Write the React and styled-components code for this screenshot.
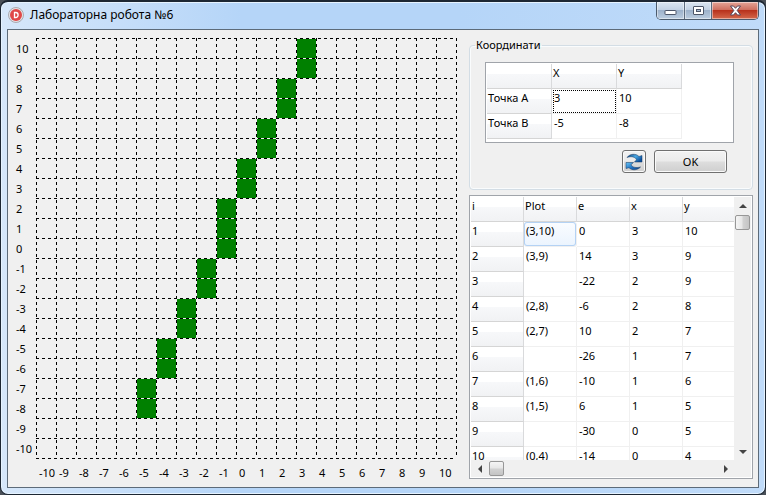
import React from 'react';
import styled, { createGlobalStyle, css } from 'styled-components';

const Global = createGlobalStyle`
  * { box-sizing: border-box; }
  body { margin: 0; background: #4a5058; }
  button, input { font: inherit; color: inherit; }
`;

const Frame = styled.main`
  display: flex;
  flex-direction: column;
  min-height: 100vh;
  padding: 0 6px;
  border: 1px solid #1d2733;
  border-top-width: 2px;
  border-radius: 8px;
  background: linear-gradient(90deg, #d6e7fa 0, #b5d5f8 240px, #b5d5f8 60%, #c0dbf9 100%);
  box-shadow: inset 0 0 0 1px #e6f3ff;
  font: 11px/14px "Noto Sans", sans-serif;
  color: #000;
`;

const TitleBar = styled.header`
  display: flex;
  align-items: flex-start;
  height: 27px;
`;

const Title = styled.h1`
  flex: 1;
  margin: 0;
  padding: 4px 0 0 6px;
  font: 12px/17px "Noto Sans", sans-serif;
`;

const AppIcon = styled.svg`
  width: 16px;
  height: 16px;
  margin: 5px 0 0 1px;
`;

const Captions = styled.div`
  display: flex;
  border: 1px solid #4b5a6c;
  border-top: 0;
  border-radius: 0 0 5px 5px;
  overflow: hidden;
`;

const CaptionButton = styled.button`
  display: grid;
  place-items: center;
  width: ${(p) => (p.$close ? 47 : 27)}px;
  height: 17px;
  padding: 0;
  border: 0;
  border-left: ${(p) => (p.$first ? 0 : '1px solid #5c6b7e')};
  background: ${(p) =>
    p.$close
      ? 'linear-gradient(#e5a598 0, #cf7060 45%, #b8321c 50%, #d4694c 100%)'
      : 'linear-gradient(#dbe6f2 0, #c3d2e4 45%, #9db2cb 50%, #bccde0 100%)'};
  box-shadow: inset 0 0 0 1px rgba(255, 255, 255, 0.45);
`;

const Client = styled.div`
  display: flex;
  flex: 1;
  gap: 12px;
  margin-bottom: 6px;
  padding: 8px 5px 7px 8px;
  border: 1px solid #5d6b79;
  background: #f0f0f0;
`;

const Chart = styled.section`
  display: grid;
  grid-template-columns: 20px 421px;
  grid-template-rows: 421px auto;
  align-content: start;
`;

const YAxis = styled.div`
  display: grid;
  grid-auto-rows: 20px;
  line-height: 22px;
`;

const XAxis = styled.div`
  grid-column: 2;
  display: grid;
  grid-template-columns: repeat(21, 20px);
  padding: 7px 0 0 3px;
  line-height: 14px;
`;

const Side = styled.div`
  display: flex;
  flex: 1;
  flex-direction: column;
  min-width: 0;
  padding-bottom: 1px;
`;

const Group = styled.fieldset`
  min-width: 0;
  height: 152px;
  margin: 0 0 5px;
  padding: 10px 18px 0 15px;
  border: 1px solid #d3dde5;
  border-radius: 4px;
  box-shadow: inset 0 0 0 1px #fafcfd;
`;

const Legend = styled.legend`
  margin-left: -10px;
  padding: 0 1px;
`;

const PointsBox = styled.div`
  height: 81px;
  padding: 1px;
  border: 1px solid #a0a4aa;
  background: #fff;
`;

const Table = styled.table`
  border-collapse: separate;
  border-spacing: 0;
  table-layout: fixed;
  width: ${(p) => p.$width}px;
`;

const heading = css`
  padding-left: 1px;
  background: linear-gradient(#fff 0, #fff 40%, #f7f8fa 42%, #f1f2f4 100%);
  border-right: 1px solid #d9dadc;
  border-bottom: 1px solid #d5d5d5;
`;

const Cell = styled.td`
  height: 25px;
  padding: 2px;
  overflow: hidden;
  border-right: 1px solid #f0f0f0;
  border-bottom: 1px solid #f0f0f0;
  font-weight: 400;
  line-height: 14px;
  text-align: left;
  vertical-align: top;
  white-space: nowrap;
  ${(p) => p.as === 'th' && heading}
  ${(p) => p.$focus && css`outline: 1px dotted #000; outline-offset: -2px;`}
  ${(p) => p.$selected && css`
    background: linear-gradient(#fafcff, #ebf4fe);
    box-shadow: inset 0 0 0 1px #b4d2f4;
    border-radius: 3px;
  `}
`;

const Actions = styled.div`
  display: flex;
  justify-content: flex-end;
  gap: 8px;
  padding: 7px 7px 0 0;
`;

const PushButton = styled.button`
  display: grid;
  place-items: center;
  width: ${(p) => p.$width}px;
  height: 23px;
  padding: 0;
  border: 1px solid #707070;
  border-radius: 3px;
  background: linear-gradient(#f2f2f2 0, #ebebeb 48%, #dddddd 52%, #cfcfcf 100%);
  box-shadow: inset 0 0 0 1px #fafafa;
`;

const ResultBox = styled.section`
  display: grid;
  flex: 1;
  grid-template-columns: 1fr 17px;
  grid-template-rows: 1fr 17px;
  min-height: 0;
  padding: 1px;
  border: 1px solid #a0a4aa;
  background: #fff;
`;

const TableView = styled.div`
  height: 263px;
  overflow: hidden;
`;

const ScrollBar = styled.div`
  display: flex;
  flex-direction: ${(p) => (p.$vertical ? 'column' : 'row')};
  background: #f0f0f0;
`;

const Arrow = styled.button`
  display: grid;
  place-items: center;
  width: 17px;
  height: 17px;
  padding: 0;
  border: 0;
  background: none;
`;

const Thumb = styled.div`
  width: 15px;
  height: 15px;
  margin: 1px;
  border: 1px solid #979797;
  border-radius: 2px;
  background: linear-gradient(${(p) => (p.$vertical ? '90deg' : '180deg')}, #f5f5f5 0, #e6e6e6 48%, #d2d2d2 52%, #c4c4c4 100%);
`;

const Track = styled.div`
  flex: 1;
`;

const Corner = styled.div`
  background: #f0f0f0;
`;

const MIN = -10;
const COUNT = 21;
const STEP = 20;
const ticks = Array.from({ length: COUNT }, (_, i) => MIN + i);
const lines = Array.from({ length: COUNT + 1 }, (_, i) => i * STEP);

const pixels = [
  [3, 10], [3, 9], [2, 8], [2, 7], [1, 6], [1, 5], [0, 4], [0, 3],
  [-1, 2], [-1, 1], [-1, 0], [-2, -1], [-2, -2], [-3, -3], [-3, -4],
  [-4, -5], [-4, -6], [-5, -7], [-5, -8],
];

const points = [
  ['Точка A', 3, 10],
  ['Точка B', -5, -8],
];

const steps = [
  [1, '(3,10)', 0, 3, 10],
  [2, '(3,9)', 14, 3, 9],
  [3, '', -22, 2, 9],
  [4, '(2,8)', -6, 2, 8],
  [5, '(2,7)', 10, 2, 7],
  [6, '', -26, 1, 7],
  [7, '(1,6)', -10, 1, 6],
  [8, '(1,5)', 6, 1, 5],
  [9, '', -30, 0, 5],
  [10, '(0,4)', -14, 0, 4],
];

const arrowPaths = {
  up: 'M0 6 4 2 8 6Z',
  down: 'M0 2 4 6 8 2Z',
  left: 'M6 0 2 4 6 8Z',
  right: 'M2 0 6 4 2 8Z',
};

function ArrowButton({ dir, label }) {
  return (
    <Arrow type="button" aria-label={label}>
      <svg width="8" height="8" viewBox="0 0 8 8">
        <path d={arrowPaths[dir]} fill="#444" />
      </svg>
    </Arrow>
  );
}

function RefreshIcon() {
  return (
    <svg width="18" height="18" viewBox="0 0 18 18" aria-hidden="true">
      <defs>
        <linearGradient id="refreshTop" x1="0" y1="0" x2="1" y2="0.6">
          <stop offset="0" stopColor="#0f3f78" />
          <stop offset="0.55" stopColor="#4aa9e4" />
          <stop offset="1" stopColor="#0b4f9c" />
        </linearGradient>
        <linearGradient id="refreshBottom" x1="0" y1="0.2" x2="1" y2="1">
          <stop offset="0" stopColor="#5cb8ee" />
          <stop offset="0.5" stopColor="#1f6fc0" />
          <stop offset="1" stopColor="#0d3f80" />
        </linearGradient>
      </defs>
      <path d="M2 4.500C5 .500 11 .300 14 3.500L17 2.500V9H9.500l2-2.200C10.500 3.800 6 3 2 4.500Z" fill="url(#refreshTop)" stroke="#12335c" strokeWidth=".5" />
      <path d="M15.500 14C12.500 17.500 7 17.700 4 14.700L1 15.500V9.500H8.500l-2.500 2.200C7.500 14.500 11.500 15.200 15.500 14Z" fill="url(#refreshBottom)" stroke="#12335c" strokeWidth=".5" />
    </svg>
  );
}

function RasterGrid() {
  return (
    <svg width="421" height="421" viewBox="0 0 421 421" shapeRendering="crispEdges" role="img" aria-label="Растр">
      {pixels.map(([x, y]) => (
        <rect key={`${x},${y}`} x={(x - MIN) * STEP + 1} y={(10 - y) * STEP + 1} width="19" height="19" fill="#008000" />
      ))}
      <g stroke="#000" strokeDasharray="3 3">
        {lines.map((n) => (
          <React.Fragment key={n}>
            <path d={`M0 ${n + 0.5}H420`} />
            <path d={`M${n + 0.5} 0V420`} />
          </React.Fragment>
        ))}
      </g>
    </svg>
  );
}

export default function App() {
  return (
    <>
      <Global />
      <Frame>
        <TitleBar>
          <AppIcon viewBox="0 0 16 16" aria-hidden="true">
            <circle cx="8" cy="8" r="7.5" fill="#e3e3e6" stroke="#a9a9b0" />
            <circle cx="8" cy="8" r="6" fill="#e04848" />
            <path d="M6.5 5.5h1.3a2.3 2.5 0 0 1 0 5H6.500Z" fill="none" stroke="#fff" strokeWidth="1.300" />
          </AppIcon>
          <Title>Лабораторна робота №6</Title>
          <Captions>
            <CaptionButton type="button" aria-label="Згорнути" $first>
              <svg width="13" height="11" viewBox="0 0 13 11">
                <rect x="1" y="5.500" width="11" height="4" rx="0.500" fill="#fff" stroke="#4c5568" />
              </svg>
            </CaptionButton>
            <CaptionButton type="button" aria-label="Розгорнути">
              <svg width="13" height="11" viewBox="0 0 13 11">
                <rect x="1.500" y="1.500" width="10" height="8" rx="0.500" fill="#fff" stroke="#4c5568" />
                <rect x="4.500" y="4.500" width="4" height="2" fill="#a9bdd5" stroke="#4c5568" />
              </svg>
            </CaptionButton>
            <CaptionButton type="button" aria-label="Закрити" $close>
              <svg width="13" height="11" viewBox="0 0 13 11">
                <path d="M1.500 1h3l2 2.300L8.500 1h3L8.200 5.500 11.500 10h-3l-2-2.300L4.500 10h-3l3.300-4.500Z" fill="#fff" stroke="#54455a" />
              </svg>
            </CaptionButton>
          </Captions>
        </TitleBar>
        <Client>
          <Chart>
            <YAxis>
              {[...ticks].reverse().map((t) => <span key={t}>{t}</span>)}
            </YAxis>
            <RasterGrid />
            <XAxis>
              {ticks.map((t) => <span key={t}>{t}</span>)}
            </XAxis>
          </Chart>
          <Side>
            <Group>
              <Legend>Координати</Legend>
              <PointsBox>
                <Table $width={195}>
                  <thead>
                    <tr>
                      {['', 'X', 'Y'].map((h) => <Cell as="th" key={h}>{h}</Cell>)}
                    </tr>
                  </thead>
                  <tbody>
                    {points.map(([name, x, y], i) => (
                      <tr key={name}>
                        <Cell as="th" scope="row">{name}</Cell>
                        <Cell $focus={i === 0}>{x}</Cell>
                        <Cell>{y}</Cell>
                      </tr>
                    ))}
                  </tbody>
                </Table>
              </PointsBox>
              <Actions>
                <PushButton type="button" aria-label="Оновити" $width={24}>
                  <RefreshIcon />
                </PushButton>
                <PushButton type="button" $width={73}>OK</PushButton>
              </Actions>
            </Group>
            <ResultBox>
              <TableView>
                <Table $width={265}>
                  <thead>
                    <tr>
                      {['i', 'Plot', 'e', 'x', 'y'].map((h) => <Cell as="th" key={h}>{h}</Cell>)}
                    </tr>
                  </thead>
                  <tbody>
                    {steps.map(([i, plot, e, x, y]) => (
                      <tr key={i}>
                        <Cell as="th" scope="row">{i}</Cell>
                        <Cell $selected={i === 1}>{plot}</Cell>
                        <Cell>{e}</Cell>
                        <Cell>{x}</Cell>
                        <Cell>{y}</Cell>
                      </tr>
                    ))}
                  </tbody>
                </Table>
              </TableView>
              <ScrollBar $vertical>
                <ArrowButton dir="up" label="Вгору" />
                <Thumb $vertical />
                <Track />
                <ArrowButton dir="down" label="Вниз" />
              </ScrollBar>
              <ScrollBar>
                <ArrowButton dir="left" label="Ліворуч" />
                <Thumb />
                <Track />
                <ArrowButton dir="right" label="Праворуч" />
              </ScrollBar>
              <Corner />
            </ResultBox>
          </Side>
        </Client>
      </Frame>
    </>
  );
}
